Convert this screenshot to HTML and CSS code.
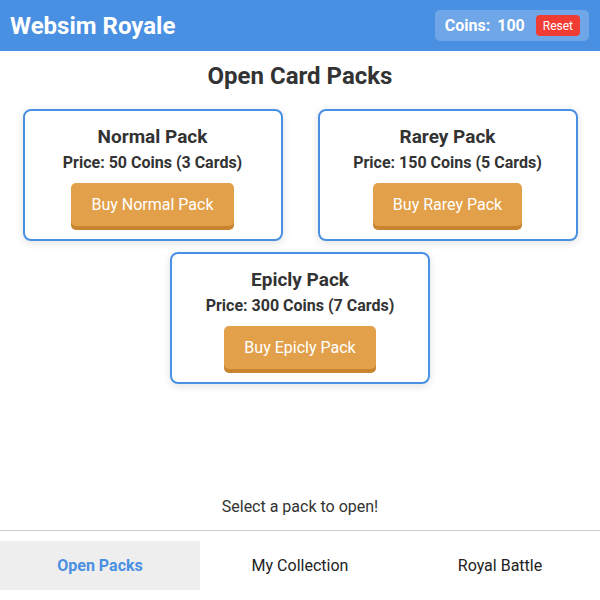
FILE: index.html
```html
<!DOCTYPE html>
<html>
<head>
<meta charset="utf-8">
<link rel="stylesheet" href="styles.css">
</head>
<body>
<header class="topbar">
  <h1 class="title">Websim Royale</h1>
  <div class="coins">
    <span class="coins-label">Coins:</span>
    <span class="coins-value">100</span>
    <button class="reset">Reset</button>
  </div>
</header>
<main class="content">
  <h2 class="heading">Open Card Packs</h2>
  <div class="packs">
    <div class="pack">
      <div class="pack-name">Normal Pack</div>
      <div class="pack-price">Price: 50 Coins (3 Cards)</div>
      <button class="buy">Buy Normal Pack</button>
    </div>
    <div class="pack">
      <div class="pack-name">Rarey Pack</div>
      <div class="pack-price">Price: 150 Coins (5 Cards)</div>
      <button class="buy">Buy Rarey Pack</button>
    </div>
    <div class="pack">
      <div class="pack-name">Epicly Pack</div>
      <div class="pack-price">Price: 300 Coins (7 Cards)</div>
      <button class="buy">Buy Epicly Pack</button>
    </div>
  </div>
  <div class="status">Select a pack to open!</div>
</main>
<nav class="tabs">
  <div class="tab active">Open Packs</div>
  <div class="tab">My Collection</div>
  <div class="tab">Royal Battle</div>
</nav>
</body>
</html>
```

FILE: styles.css
```css
* { box-sizing: border-box; }
html, body { margin: 0; padding: 0; }
body {
  font-family: Roboto, "Liberation Sans", sans-serif;
  color: #333;
  background: #fff;
  width: 600px;
  height: 600px;
  display: flex;
  flex-direction: column;
}
.topbar {
  height: 51px;
  background: #4a90e2;
  display: flex;
  align-items: center;
  justify-content: space-between;
  padding: 0 11px 0 10px;
}
.title {
  margin: 0;
  color: #fff;
  font-size: 24px;
  font-weight: 700;
}
.coins {
  background: rgba(255,255,255,0.2);
  border-radius: 5px;
  height: 31px;
  display: flex;
  align-items: center;
  padding: 0 9px 0 10px;
  color: #fff;
  font-weight: 700;
  font-size: 16px;
}
.coins-value { margin-left: 7px; }
.reset {
  margin-left: 11px;
  background: #f03c32;
  color: #fff;
  border: none;
  border-radius: 4px;
  font-family: Roboto, "Liberation Sans", sans-serif;
  font-size: 12px;
  height: 21px;
  padding: 0 7px;
}
.content {
  flex: 1;
  display: flex;
  flex-direction: column;
  align-items: center;
}
.heading {
  margin: 11px 0 0;
  font-size: 24px;
  font-weight: 700;
  color: #333;
  line-height: 28px;
}
.packs {
  margin-top: 19px;
  display: flex;
  flex-wrap: wrap;
  justify-content: center;
  gap: 11px 35px;
  width: 600px;
}
.pack {
  width: 260px;
  height: 132px;
  border: 2px solid #4a90e2;
  border-radius: 8px;
  box-shadow: 0 2px 8px rgba(0,0,0,0.12);
  display: flex;
  flex-direction: column;
  align-items: center;
  padding-top: 15px;
}
.pack-name {
  font-size: 19px;
  font-weight: 700;
  line-height: 22px;
}
.pack-price {
  margin-top: 5px;
  font-size: 16px;
  font-weight: 700;
  line-height: 19px;
}
.buy {
  margin-top: 11px;
  background: #e2a04b;
  color: #fff;
  border: none;
  border-radius: 5px;
  box-shadow: 0 4px 0 #c9842f;
  font-family: Roboto, "Liberation Sans", sans-serif;
  font-size: 16px;
  height: 43px;
  padding: 0 20px;
}
.status {
  margin-top: auto;
  margin-bottom: 14px;
  font-size: 16px;
  color: #333;
}
.tabs {
  border-top: 1px solid #ccc;
  padding: 10px 0;
  display: flex;
}
.tab {
  flex: 1;
  height: 49px;
  display: flex;
  align-items: center;
  justify-content: center;
  font-size: 16px;
  color: #222;
}
.tab.active {
  background: #eee;
  color: #4a90e2;
  font-weight: 700;
}
```
